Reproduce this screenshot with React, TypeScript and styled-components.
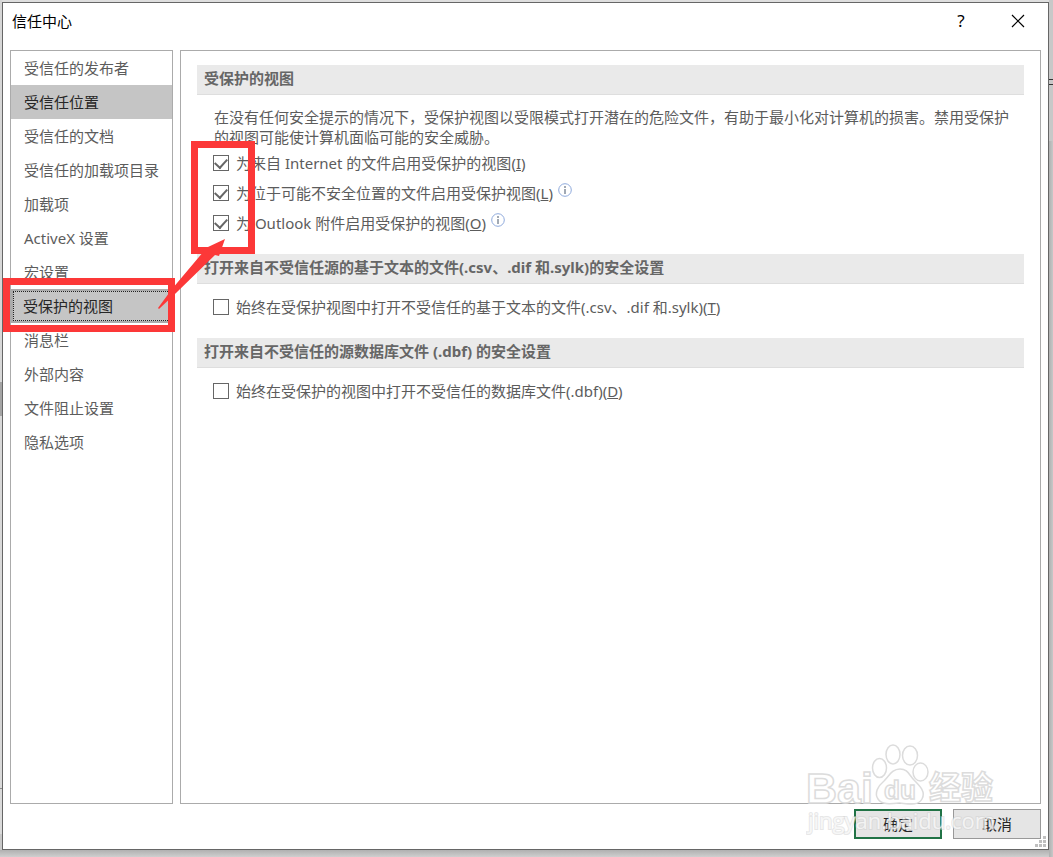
import React, { useState } from "react";
import styled, { createGlobalStyle, css } from "styled-components";

const RED = "#fc3838";

const GlobalStyle = createGlobalStyle`
  * { box-sizing: border-box; }
  html, body { margin: 0; padding: 0; }
  body {
    background: #c8c8c8;
    color: #5c5c5c;
    font: 15px/20px "Noto Sans", "Noto Sans CJK SC", sans-serif;
  }
  button, input { font: inherit; }
`;

const Desktop = styled.div`
  display: flex;
  min-height: 100vh;
  padding: 2px 4px 7px 2px;
  background:
    linear-gradient(#a4a4a4, #a4a4a4) 0 382px / 2px 34px no-repeat,
    linear-gradient(#8c8c8c, #8c8c8c) 0 788px / 2px 1px no-repeat,
    linear-gradient(#d6d6d6, #dadada) 0 0 / 2px 834px no-repeat,
    linear-gradient(#333, #333) right 79px / 4px 1px no-repeat,
    linear-gradient(#333, #333) right 84px / 4px 1px no-repeat,
    linear-gradient(#c8c8c8, #c8c8c8) right 0 / 4px 141px no-repeat,
    linear-gradient(#dedede, #dedede) 0 0 / 100% 2px no-repeat,
    linear-gradient(to right, #aeb0b0, #c8c8c8) right 0 / 4px 100% no-repeat,
    linear-gradient(to top, #cfcfcf, #b0b0b0) 0 bottom / 100% 7px no-repeat;
`;

const Dialog = styled.div`
  position: relative;
  display: flex;
  flex: 1;
  flex-direction: column;
  min-width: 0;
  border: 1px solid #666;
  background: #fff;
`;

const TitleBar = styled.header`
  display: flex;
  align-items: center;
  height: 47px;
  padding: 0 8px 12px 9px;
  color: #000;
`;

const Title = styled.h1`
  flex: 1;
  margin: 0;
  font-size: 15px;
  font-weight: 400;
`;

const TitleButton = styled.button`
  display: grid;
  place-items: center;
  width: 44px;
  height: 32px;
  margin-left: 13px;
  padding: 0;
  border: 0;
  background: none;
  color: #000;
  font-size: 17px;
`;

const Body = styled.div`
  display: flex;
  flex: 1;
  gap: 7px;
  padding: 0 7px;
`;

const Sidebar = styled.nav`
  flex: 0 0 163px;
  border: 1px solid #ababab;
`;

const NavList = styled.ul`
  margin: 0;
  padding: 0;
  list-style: none;
`;

const NavButton = styled.button<{ $highlight: boolean; $focused: boolean }>`
  display: block;
  width: 100%;
  height: 34px;
  padding: 0 0 0 13px;
  border: 0;
  background: ${(p) => (p.$highlight || p.$focused ? "#c5c5c5" : "transparent")};
  color: ${(p) => (p.$highlight || p.$focused ? "#262626" : "#5c5c5c")};
  text-align: left;
  white-space: nowrap;
  outline: none;
  ${(p) =>
    p.$focused &&
    css`
      border: 2px solid #ababab;
      padding-left: 10px;
      outline: 1px dotted #222;
      outline-offset: -3px;
    `}
`;

const Content = styled.main`
  flex: 1;
  min-width: 0;
  padding: 14px 16px;
  border: 1px solid #ababab;
`;

const Section = styled.section`
  margin-bottom: 16px;
`;

const SectionTitle = styled.h2`
  height: 30px;
  margin: 0;
  padding: 3px 7px;
  border-bottom: 1px solid #dedede;
  background: #eaeaea;
  color: #666;
  font-size: 15px;
  font-weight: 700;
`;

const Note = styled.p`
  margin: 12px 8px 1px 17px;
`;

const Options = styled.div<{ $spaced?: boolean }>`
  padding: ${(p) => (p.$spaced ? "8px" : "0")} 16px 0;
`;

const OptionRow = styled.div`
  display: flex;
  align-items: center;
  height: 30px;
`;

const OptionLabel = styled.label`
  display: flex;
  align-items: center;
  gap: 7px;
  white-space: nowrap;
`;

const CheckBox = styled.input`
  appearance: none;
  display: grid;
  place-items: center;
  width: 16px;
  height: 16px;
  margin: 0;
  border: 1px solid #666;
  background: #fff;
  &:checked::after {
    content: "";
    width: 10px;
    height: 6px;
    margin-top: -3px;
    border: solid #666;
    border-width: 0 0 2px 2px;
    transform: rotate(-48deg);
  }
`;

const InfoIcon = styled.svg`
  flex: none;
  width: 14px;
  height: 14px;
  margin: 0 0 7px 5px;
`;

const Footer = styled.footer`
  display: flex;
  justify-content: flex-end;
  gap: 11px;
  padding: 5px 7px 10px;
`;

const ActionButton = styled.button<{ $primary?: boolean }>`
  width: 88px;
  height: 30px;
  padding: 0;
  border: ${(p) => (p.$primary ? "2px solid #217346" : "1px solid #999")};
  background: #e5e5e5;
  color: #262626;
`;

const SizeGrip = styled.svg`
  position: absolute;
  right: 1px;
  bottom: 1px;
  width: 12px;
  height: 12px;
`;

const Marks = styled.svg`
  position: absolute;
  top: 138px;
  left: 0;
  width: 253px;
  height: 192px;
  pointer-events: none;
`;

const Watermark = styled.svg`
  position: absolute;
  right: 40px;
  bottom: 4px;
  width: 202px;
  height: 104px;
  pointer-events: none;
`;

const pages = [
  "受信任的发布者", "受信任位置", "受信任的文档", "受信任的加载项目录", "加载项", "ActiveX 设置",
  "宏设置", "受保护的视图", "消息栏", "外部内容", "文件阻止设置", "隐私选项",
];

interface OptionProps {
  text: string;
  accessKey: string;
  initial?: boolean;
  info?: boolean;
}

function Option({ text, accessKey, initial = false, info = false }: OptionProps) {
  const [checked, setChecked] = useState(initial);
  return (
    <OptionRow>
      <OptionLabel>
        <CheckBox type="checkbox" checked={checked} onChange={() => setChecked(!checked)} />
        <span>{text}(<u>{accessKey}</u>)</span>
      </OptionLabel>
      {info && (
        <InfoIcon viewBox="0 0 14 14" aria-hidden="true">
          <circle cx="7" cy="7" r="6.3" fill="none" stroke="#8faadc" />
          <path d="M7 3v2M7 6v5" stroke="#44546a" />
        </InfoIcon>
      )}
    </OptionRow>
  );
}

export default function App() {
  const [focused, setFocused] = useState(7);
  return (
    <>
      <GlobalStyle />
      <Desktop>
        <Dialog role="dialog" aria-labelledby="dialog-title">
          <TitleBar>
            <Title id="dialog-title">信任中心</Title>
            <TitleButton aria-label="帮助">?</TitleButton>
            <TitleButton aria-label="关闭">
              <svg width="14" height="14" viewBox="0 0 14 14">
                <path d="M1 1l12 12M13 1L1 13" stroke="#000" strokeWidth="1.2" />
              </svg>
            </TitleButton>
          </TitleBar>
          <Body>
            <Sidebar>
              <NavList>
                {pages.map((page, i) => (
                  <li key={page}>
                    <NavButton $highlight={i === 1} $focused={i === focused} onClick={() => setFocused(i)}>
                      {page}
                    </NavButton>
                  </li>
                ))}
              </NavList>
            </Sidebar>
            <Content>
              <Section>
                <SectionTitle>受保护的视图</SectionTitle>
                <Note>
                  在没有任何安全提示的情况下，受保护视图以受限模式打开潜在的危险文件，有助于最小化对计算机的损害。禁用受保护的视图可能使计算机面临可能的安全威胁。
                </Note>
                <Options>
                  <Option text="为来自 Internet 的文件启用受保护的视图" accessKey="I" initial />
                  <Option text="为位于可能不安全位置的文件启用受保护视图" accessKey="L" initial info />
                  <Option text="为 Outlook 附件启用受保护的视图" accessKey="O" initial info />
                </Options>
              </Section>
              <Section>
                <SectionTitle>打开来自不受信任源的基于文本的文件(.csv、.dif 和.sylk)的安全设置</SectionTitle>
                <Options $spaced>
                  <Option text="始终在受保护视图中打开不受信任的基于文本的文件(.csv、.dif 和.sylk)" accessKey="T" />
                </Options>
              </Section>
              <Section>
                <SectionTitle>打开来自不受信任的源数据库文件 (.dbf) 的安全设置</SectionTitle>
                <Options $spaced>
                  <Option text="始终在受保护的视图中打开不受信任的数据库文件(.dbf)" accessKey="D" />
                </Options>
              </Section>
            </Content>
          </Body>
          <Footer>
            <ActionButton $primary>确定</ActionButton>
            <ActionButton>取消</ActionButton>
          </Footer>
          <SizeGrip viewBox="0 0 12 12" aria-hidden="true">
            <path
              d="M8 0h3v3h-3zM4 4h3v3h-3zM8 4h3v3h-3zM0 8h3v3h-3zM4 8h3v3h-3zM8 8h3v3h-3z"
              fill="#bfbfbf"
            />
          </SizeGrip>
          <Marks viewBox="3 141 253 192" aria-hidden="true">
            <rect x="6.5" y="281.5" width="165" height="47" fill="none" stroke={RED} strokeWidth="7" />
            <rect x="194.5" y="144.5" width="57" height="106" fill="none" stroke={RED} strokeWidth="7" />
            <path d="M158 308L172 289L204 251L208 247L225 239L219 256L215 255L176 293L159 309Z" fill={RED} />
          </Marks>
          <Watermark viewBox="806 741 202 104" aria-hidden="true">
            <g
              fill="#fff"
              fillOpacity="0.6"
              stroke="#dcdcdc"
              strokeWidth="1.5"
              fontFamily="'Liberation Sans', sans-serif"
              fontWeight="700"
            >
              <text x="806" y="803" fontSize="43">Bai</text>
              <ellipse cx="879.5" cy="768" rx="7" ry="9.5" />
              <ellipse cx="893" cy="754.5" rx="7" ry="9.5" />
              <ellipse cx="910" cy="755.5" rx="7.5" ry="9.5" />
              <ellipse cx="920.5" cy="772" rx="7.5" ry="9" />
              <path d="M900 769C892 769 889 776 884 781C878 786 874 793 878 799C882 805 890 804 900 803C910 804 918 806 922 799C926 792 920 786 914 780C909 775 908 769 900 769Z" />
              <text x="884" y="799" fontSize="26">du</text>
              <text x="929" y="799" fontSize="32" fontFamily="'Noto Sans CJK SC', sans-serif">经验</text>
            </g>
            <text
              x="808"
              y="829"
              fontSize="22"
              fontFamily="'Open Sans', sans-serif"
              fill="#fff"
              fillOpacity="0.7"
              stroke="#d0d0d0"
              strokeOpacity="0.5"
              strokeWidth="2"
              paintOrder="stroke"
            >
              jingyan.baidu.com
            </text>
          </Watermark>
        </Dialog>
      </Desktop>
    </>
  );
}
